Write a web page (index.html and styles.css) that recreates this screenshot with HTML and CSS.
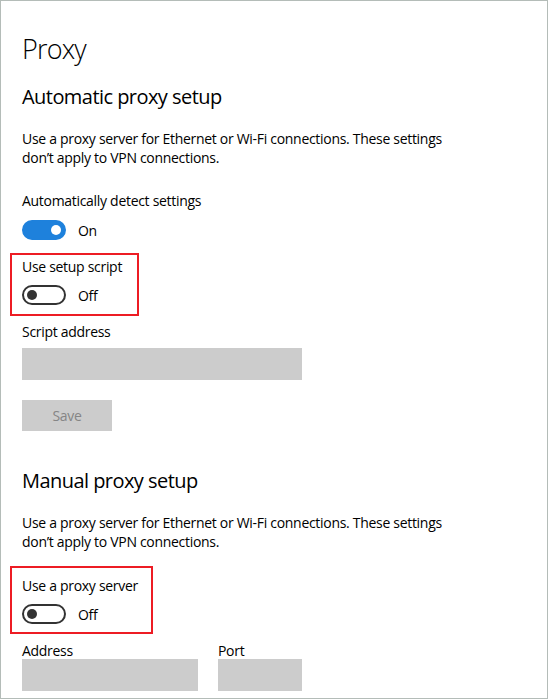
FILE: index.html
```html
<!DOCTYPE html>
<html lang="en">
<head>
    <meta charset="UTF-8">
    <meta name="viewport" content="width=device-width, initial-scale=1.0">
    <title>Proxy</title>
    <link rel="stylesheet" href="styles.css">
</head>
<body>
<div class="window">
    <h1 class="title">Proxy</h1>

    <!-- automatic setup -->
    <section class="group">
        <h2>Automatic proxy setup</h2>
        <p class="desc">Use a proxy server for Ethernet or Wi-Fi connections. These settings<br>don’t apply to VPN connections.</p>

        <div class="setting">
            <div class="label">Automatically detect settings</div>
            <div class="toggle-row">
                <span class="toggle on"></span>
                <span>On</span>
            </div>
        </div>

        <div class="setting mark mark-script">
            <div class="label">Use setup script</div>
            <div class="toggle-row">
                <span class="toggle"></span>
                <span>Off</span>
            </div>
        </div>

        <div class="field">
            <div class="label">Script address</div>
            <div class="input script-input"></div>
        </div>

        <button class="save" disabled>Save</button>
    </section>

    <!-- manual setup -->
    <section class="group manual">
        <h2>Manual proxy setup</h2>
        <p class="desc">Use a proxy server for Ethernet or Wi-Fi connections. These settings<br>don’t apply to VPN connections.</p>

        <div class="setting mark mark-proxy">
            <div class="label">Use a proxy server</div>
            <div class="toggle-row">
                <span class="toggle"></span>
                <span>Off</span>
            </div>
        </div>

        <div class="address-row">
            <div class="field">
                <div class="label small">Address</div>
                <div class="input address-input"></div>
            </div>
            <div class="field">
                <div class="label small">Port</div>
                <div class="input port-input"></div>
            </div>
        </div>
    </section>
</div>
</body>
</html>
```

FILE: styles.css
```css
body {
    margin: 0;
    padding: 0;
    background: #fff;
    font-family: "Segoe UI", "Open Sans", "Noto Sans", sans-serif;
    color: #000;
    letter-spacing: -0.3px;
}
.window {
    width: 548px;
    height: 699px;
    box-sizing: border-box;
    border: 1px solid #b4bcb8;
    padding: 30px 0 0 21px;
    overflow: hidden;
}
.title {
    margin: 0;
    font-size: 27px;
    font-weight: 300;
    line-height: 36px;
    letter-spacing: -0.8px;
}
h2 {
    margin: 16px 0 0;
    font-size: 20px;
    font-weight: 400;
    line-height: 28px;
    letter-spacing: -0.55px;
}
.desc {
    margin: 18px 0 0;
    font-size: 14px;
    line-height: 19px;
}
.setting {
    margin-top: 24px;
}
.label {
    font-size: 14px;
    line-height: 19px;
}
.toggle-row {
    display: flex;
    align-items: center;
    gap: 12px;
    margin-top: 10px;
    height: 20px;
    font-size: 14px;
}
.toggle {
    position: relative;
    width: 44px;
    height: 20px;
    box-sizing: border-box;
    border: 2px solid #333;
    border-radius: 10px;
}
.toggle::after {
    content: "";
    position: absolute;
    left: 3px;
    top: 3px;
    width: 10px;
    height: 10px;
    border-radius: 50%;
    background: #333;
}
.toggle.on {
    background: #1e81dc;
    border-color: #1e81dc;
}
.toggle.on::after {
    left: auto;
    right: 3px;
    background: #fff;
}
.mark {
    margin-left: -12px;
    box-sizing: border-box;
    border: 2px solid #ed1c24;
    padding-left: 10px;
}
.mark .toggle-row {
    margin-top: 9px;
}
.mark-script {
    margin-top: 13px;
    width: 129px;
    padding-top: 2px;
    padding-bottom: 9px;
}
.mark-proxy {
    margin-top: 15px;
    width: 143px;
    padding-top: 8px;
    padding-bottom: 8px;
}
.field {
    margin-top: 6px;
}
.input {
    margin-top: 7px;
    height: 32px;
    background: #cccccc;
}
.script-input {
    width: 280px;
}
.save {
    display: block;
    margin-top: 20px;
    width: 90px;
    height: 31px;
    border: none;
    background: #cccccc;
    color: #858585;
    font-family: inherit;
    font-size: 14px;
    letter-spacing: inherit;
    padding: 0;
}
.manual h2 {
    margin-top: 36px;
}
.address-row {
    display: flex;
    gap: 20px;
    margin-top: 9px;
}
.address-row .field {
    margin-top: 0;
}
.label.small {
    line-height: 16px;
}
.address-row .input {
    margin-top: 0;
}
.address-input {
    width: 176px;
}
.port-input {
    width: 84px;
}
```
